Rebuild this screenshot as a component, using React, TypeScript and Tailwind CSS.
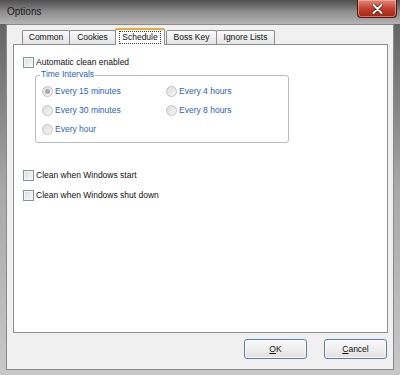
import React from "react";

const font = { fontFamily: '"Liberation Sans", Arial, sans-serif' };

function CheckBox({ label }: { label: string }) {
    return (
        <div className="flex items-center h-[13px] gap-[2px]">
            <span className="w-[11px] h-[11px] border border-[#8593a3] bg-gradient-to-br from-[#dcdcdc] to-[#fbfbfb] shadow-[inset_0_0_0_1px_#f4f4f4]" />
            <span className="text-[8.5px] text-[#111] leading-none">{label}</span>
        </div>
    );
}

function Radio({ label, checked }: { label: string; checked?: boolean }) {
    return (
        <div className="flex items-center h-[13px] gap-[2px]">
            <span className="w-[11px] h-[11px] rounded-full border border-[#c2c2c2] bg-gradient-to-br from-[#dedede] to-[#f6f6f6] flex items-center justify-center">
                {checked && <span className="w-[5px] h-[5px] rounded-full bg-[#a9a9a9]" />}
            </span>
            <span className="text-[8.5px] text-[#2d5fb8] leading-none">{label}</span>
        </div>
    );
}

function Tab({ label, width, active }: { label: string; width: string; active?: boolean }) {
    if (active) {
        return (
            <div
                className={`${width} h-[17px] -mb-px z-10 bg-white border border-b-0 border-[#8c8e94] border-t-[2px] border-t-[#e9a83a] rounded-t-[2px] flex items-start justify-center pt-[1px]`}
            >
                <span className="text-[8.5px] text-[#111] leading-none px-[2px] py-[1px] border border-dotted border-[#444]">
                    {label}
                </span>
            </div>
        );
    }
    return (
        <div
            className={`${width} h-[14px] bg-gradient-to-b from-[#fafafa] to-[#e4e4e4] border border-b-0 border-[#8c8e94] rounded-t-[2px] flex items-center justify-center`}
        >
            <span className="text-[8.5px] text-[#111] leading-none">{label}</span>
        </div>
    );
}

function Button({ label }: { label: string }) {
    return (
        <button
            type="button"
            className="w-[63px] h-[20px] rounded-[3px] border border-[#5b7ea6] bg-gradient-to-b from-[#f8f8f8] via-[#efefef] to-[#e0e0e0] shadow-[inset_0_0_0_1px_#fbfdff] flex items-center justify-center"
        >
            <span className="text-[8.5px] text-[#111] leading-none">
                <span className="underline">{label[0]}</span>
                {label.slice(1)}
            </span>
        </button>
    );
}

export default function App() {
    return (
        <div
            className="w-[400px] h-[375px] flex flex-col bg-gradient-to-b from-[#5a5a5a] via-[#a8a8a8] to-[#c8c8c8] overflow-hidden"
            style={font}
        >
            {/* Title bar */}
            <div className="h-[24px] flex justify-between items-start bg-gradient-to-b from-[#4e4e4e] via-[#8e8e8e] to-[#b4b4b4]">
                <span className="text-[10px] text-[#1b1b1b] pl-[7px] pt-[7px] leading-none">Options</span>
                <div className="mr-[3px] w-[40px] h-[18px] rounded-b-[4px] border border-t-0 border-[#4a1a14] bg-gradient-to-b from-[#e0877a] via-[#c4402e] to-[#a32414] shadow-[inset_0_0_0_1px_rgba(255,200,190,0.5)] flex items-center justify-center">
                    <svg width="11" height="10" viewBox="0 0 11 10">
                        <path d="M1.5 1 L9.5 9 M9.5 1 L1.5 9" stroke="#3a0d08" strokeWidth="3.2" strokeLinecap="round" />
                        <path d="M1.5 1 L9.5 9 M9.5 1 L1.5 9" stroke="#ffffff" strokeWidth="2" strokeLinecap="round" />
                    </svg>
                </div>
            </div>

            {/* Client area */}
            <div className="ml-[6px] w-[388px] h-[346px] bg-[#f0f0f0] border border-[#8a8a8a] flex flex-col pt-[3px]">
                {/* Tabs */}
                <div className="ml-[6px] h-[16px] flex items-end pl-[9px]">
                    <Tab label="Common" width="w-[48px]" />
                    <Tab label="Cookies" width="w-[47px] -ml-px" />
                    <Tab label="Schedule" width="w-[50px] -ml-px" active />
                    <Tab label="Boss Key" width="w-[51px] ml-[1px]" />
                    <Tab label="Ignore Lists" width="w-[59px] -ml-px" />
                </div>

                {/* Panel */}
                <div className="ml-[6px] w-[375px] h-[289px] bg-white border border-[#8c8e94] flex flex-col pl-[9px] pt-[11px]">
                    <CheckBox label="Automatic clean enabled" />

                    <div className="relative ml-[12px] mt-[6px] w-[254px] h-[68px] border border-[#b7bcc2] rounded-[3px]">
                        <span className="absolute -top-[6px] left-[4px] bg-white px-[1px] text-[8.5px] text-[#2d5fb8] leading-none">
                            Time Intervals
                        </span>
                        <div className="grid grid-cols-[124px_1fr] gap-y-[6px] pl-[6px] pt-[9px]">
                            <Radio label="Every 15 minutes" checked />
                            <Radio label="Every 4 hours" />
                            <Radio label="Every 30 minutes" />
                            <Radio label="Every 8 hours" />
                            <Radio label="Every hour" />
                        </div>
                    </div>

                    <div className="mt-[26px] flex flex-col gap-[7px]">
                        <CheckBox label="Clean when Windows start" />
                        <CheckBox label="Clean when Windows shut down" />
                    </div>
                </div>

                {/* Buttons */}
                <div className="mt-[6px] flex justify-end gap-[17px] pr-[6px]">
                    <Button label="OK" />
                    <Button label="Cancel" />
                </div>
            </div>
        </div>
    );
}
